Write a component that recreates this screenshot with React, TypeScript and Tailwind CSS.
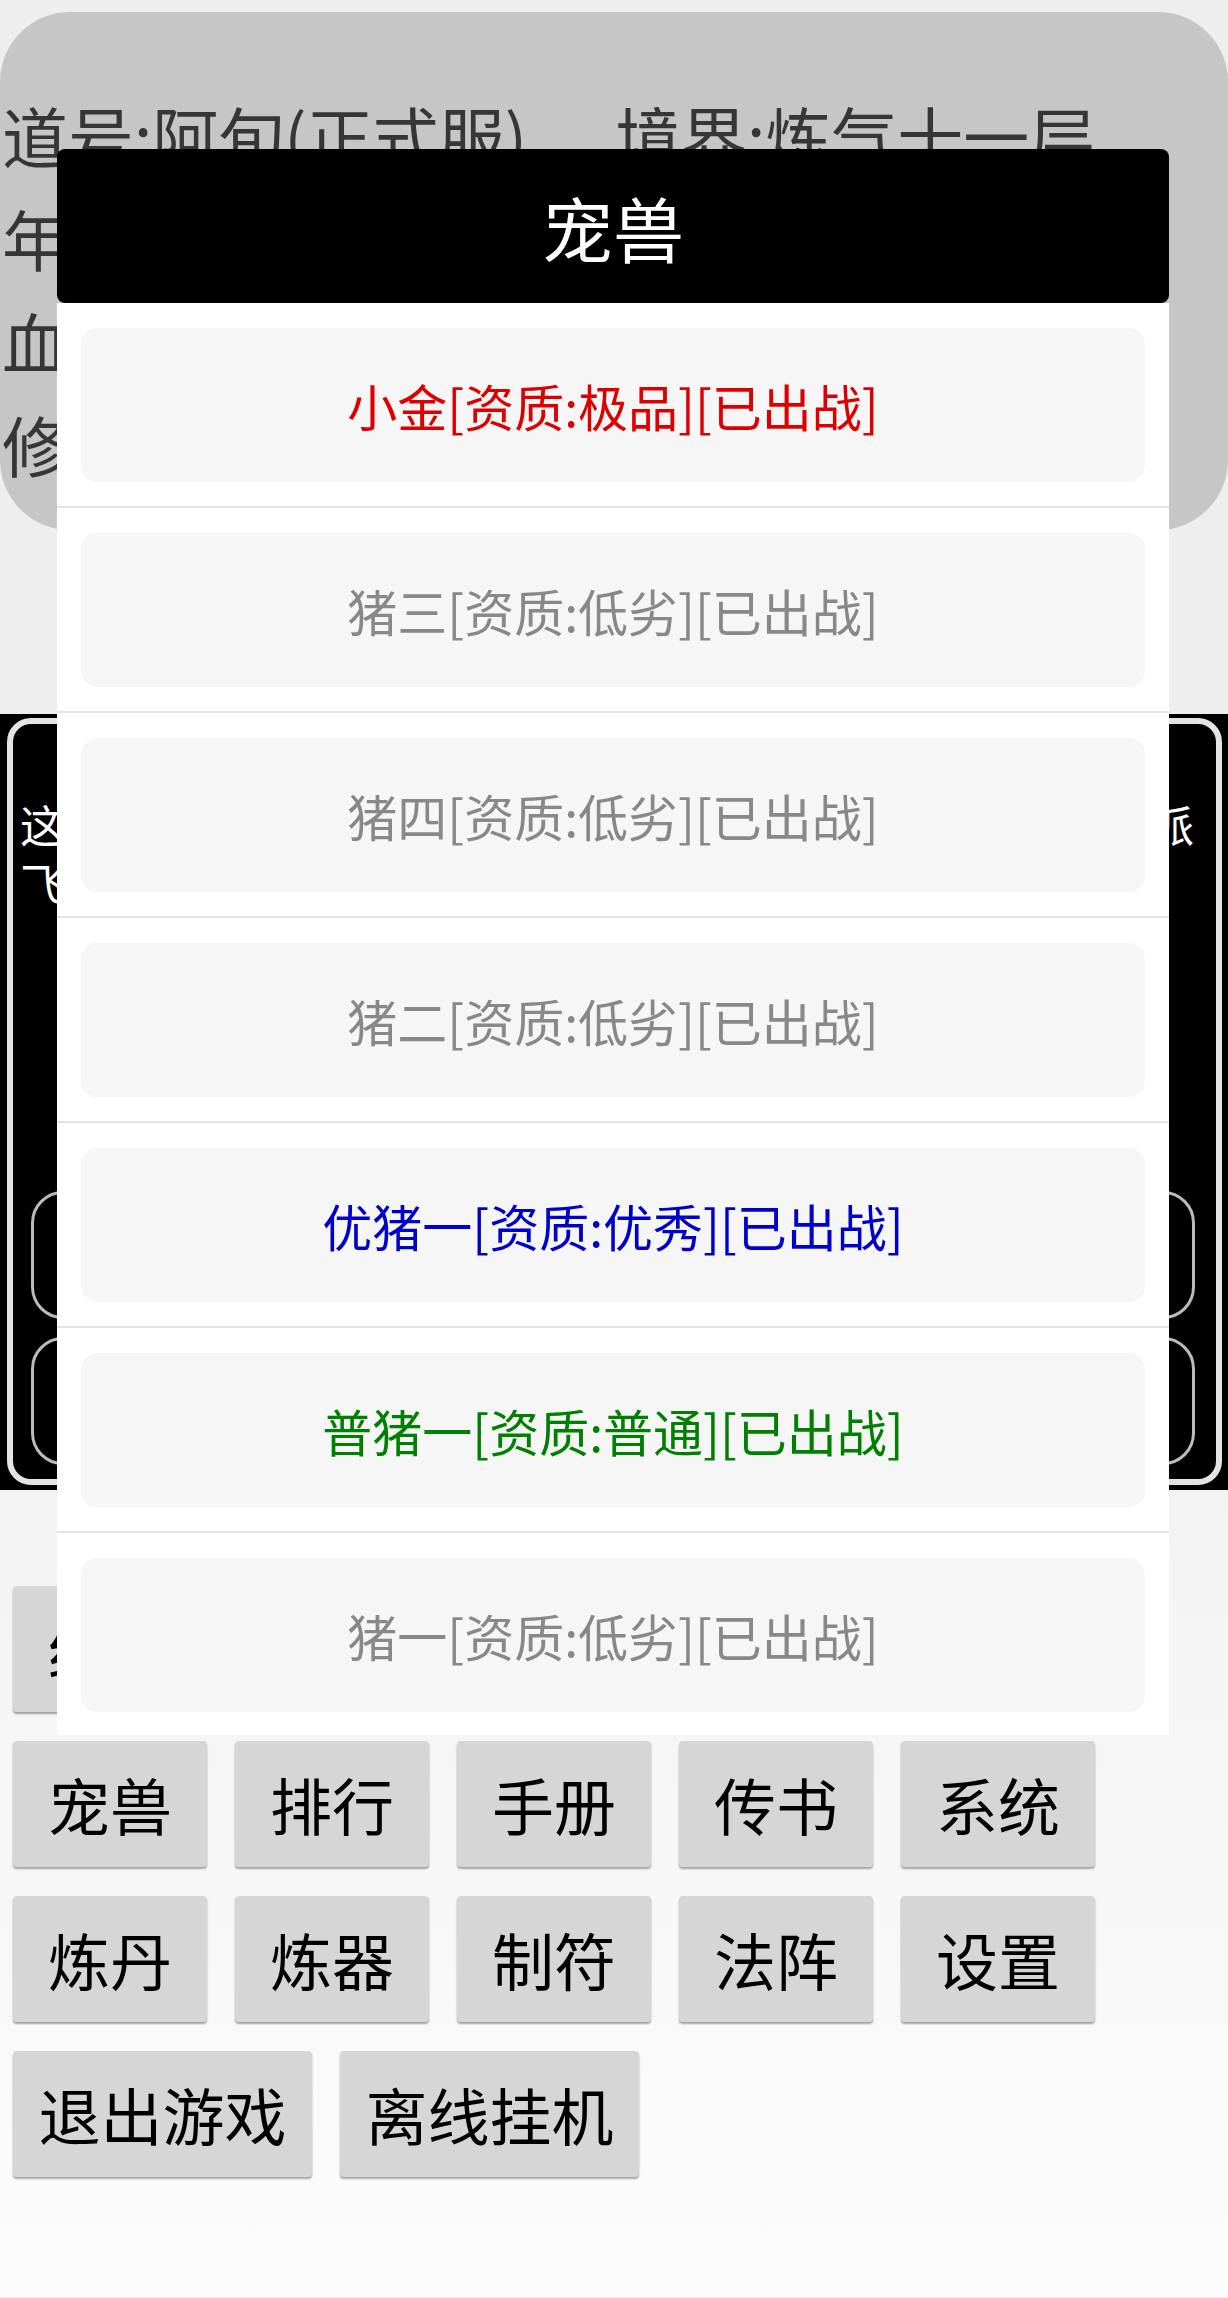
import React from 'react';

const pets = [
  { name: '小金[资质:极品][已出战]', color: 'text-[#dd0000]' },
  { name: '猪三[资质:低劣][已出战]', color: 'text-[#888888]' },
  { name: '猪四[资质:低劣][已出战]', color: 'text-[#888888]' },
  { name: '猪二[资质:低劣][已出战]', color: 'text-[#888888]' },
  { name: '优猪一[资质:优秀][已出战]', color: 'text-[#0000cc]' },
  { name: '普猪一[资质:普通][已出战]', color: 'text-[#008000]' },
  { name: '猪一[资质:低劣][已出战]', color: 'text-[#888888]' },
];

const menuRows = [
  ['经脉', '背包', '功法', '洞府', '坊市'],
  ['宠兽', '排行', '手册', '传书', '系统'],
  ['炼丹', '炼器', '制符', '法阵', '设置'],
];

function MenuButton({ label, wide }: { label: string; wide?: boolean }) {
  return (
    <button
      className={`${wide ? 'w-[299px]' : 'w-[194px]'} h-[126px] rounded-[4px] bg-[#d6d6d6] text-[62px] leading-none text-black shadow-[0_2px_2px_rgba(0,0,0,0.35)] flex items-center justify-center`}
    >
      {label}
    </button>
  );
}

function PetDialog() {
  return (
    <div className="absolute left-[57px] top-[149px] w-[1112px]">
      <div className="h-[154px] rounded-[8px] bg-black flex items-center justify-center text-white text-[71px] leading-none">
        宠兽
      </div>
      <div className="bg-white">
        {pets.map((p, i) => (
          <div
            key={p.name}
            className={`px-[24px] pt-[25px] ${
              i < pets.length - 1 ? 'pb-[24px] border-b-2 border-[#e4e4e4]' : 'pb-[23px]'
            }`}
          >
            <div
              className={`h-[154px] rounded-[16px] bg-[#f6f6f6] flex items-center justify-center text-[50px] leading-none ${p.color}`}
            >
              {p.name}
            </div>
          </div>
        ))}
      </div>
    </div>
  );
}

export default function App() {
  return (
    <div className="relative min-h-[2298px] bg-[#eeeeee] font-['Noto_Sans_CJK_SC',sans-serif]">
      {/* player info card */}
      <div className="pt-[12px]">
        <div className="rounded-[70px] bg-[#c6c6c6] pt-[71px] pb-[35px] pl-[2px] text-[66px] leading-[103px] text-[#363636] grid grid-cols-2">
          <div>道号:阿旬(正式服)</div>
          <div>境界:炼气十一层</div>
          <div>年龄:18</div>
          <div>寿元:120</div>
          <div>血量:1200</div>
          <div>灵力:800</div>
          <div>修为:3560</div>
          <div>灵石:999</div>
        </div>
      </div>

      {/* story panel */}
      <div className="mt-[184px] h-[776px] bg-black pt-[4px] pl-[7px] pr-[6px] pb-[5px]">
        <div className="h-full rounded-[24px] border-[6px] border-[#e4e4e4] bg-black flex flex-col text-white">
          <div className="pt-[71px] pl-[7px] pr-[22px] text-[44px] leading-[58px]">
            <div className="text-justify [text-align-last:justify]">
              这里是修仙世界，道友可在此修炼、炼丹、炼器，加入门派
            </div>
            <div>飞升成仙指日可待。</div>
          </div>
          <div className="mt-auto pl-[18px] pr-[21px] pb-[14px] flex flex-col gap-[18px]">
            <button className="h-[128px] rounded-[32px] border-[3px] border-[#bbbbbb] text-[44px] text-white">
              继续修炼
            </button>
            <button className="h-[128px] rounded-[32px] border-[3px] border-[#bbbbbb] text-[44px] text-white">
              外出历练
            </button>
          </div>
        </div>
      </div>

      {/* menu */}
      <div className="pt-[96px] pb-[120px] px-[13px] flex flex-col gap-[29px] bg-linear-to-b from-[#f3f3f3] to-[#fcfcfc]">
        {menuRows.map((row) => (
          <div key={row[0]} className="flex gap-[28px]">
            {row.map((label) => (
              <MenuButton key={label} label={label} />
            ))}
          </div>
        ))}
        <div className="flex gap-[28px]">
          <MenuButton label="退出游戏" wide />
          <MenuButton label="离线挂机" wide />
        </div>
      </div>

      <PetDialog />
    </div>
  );
}
